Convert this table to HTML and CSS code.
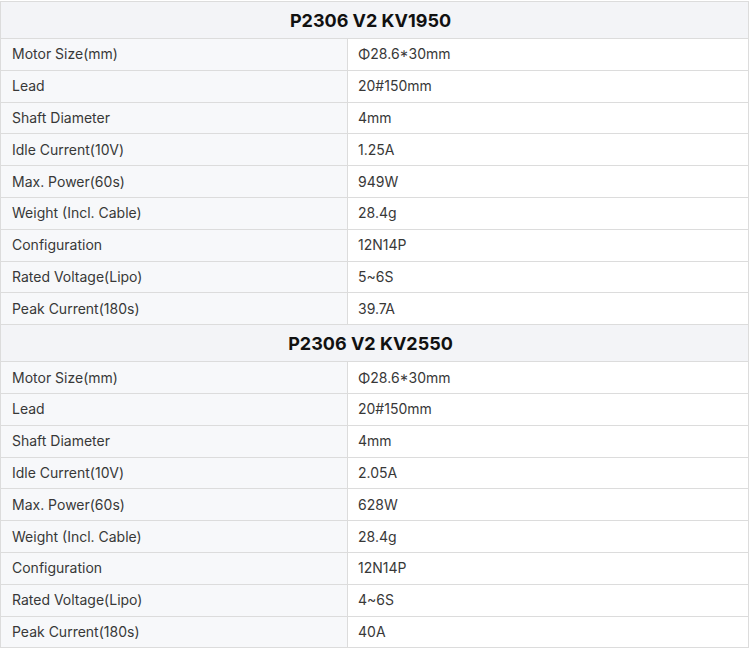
FILE: index.html
```html
<!DOCTYPE html>
<html>
<head>
<meta charset="utf-8">
<link rel="stylesheet" href="styles.css">
</head>
<body>
<table class="spec">
  <tbody>
    <tr class="head"><th colspan="2">P2306 V2 KV1950</th></tr>
    <tr><td class="k">Motor Size(mm)</td><td class="v">Φ28.6*30mm</td></tr>
    <tr><td class="k">Lead</td><td class="v">20#150mm</td></tr>
    <tr><td class="k">Shaft Diameter</td><td class="v">4mm</td></tr>
    <tr><td class="k">Idle Current(10V)</td><td class="v">1.25A</td></tr>
    <tr><td class="k">Max. Power(60s)</td><td class="v">949W</td></tr>
    <tr><td class="k">Weight (Incl. Cable)</td><td class="v">28.4g</td></tr>
    <tr><td class="k">Configuration</td><td class="v">12N14P</td></tr>
    <tr><td class="k">Rated Voltage(Lipo)</td><td class="v">5~6S</td></tr>
    <tr><td class="k">Peak Current(180s)</td><td class="v">39.7A</td></tr>
    <tr class="head"><th colspan="2">P2306 V2 KV2550</th></tr>
    <tr><td class="k">Motor Size(mm)</td><td class="v">Φ28.6*30mm</td></tr>
    <tr><td class="k">Lead</td><td class="v">20#150mm</td></tr>
    <tr><td class="k">Shaft Diameter</td><td class="v">4mm</td></tr>
    <tr><td class="k">Idle Current(10V)</td><td class="v">2.05A</td></tr>
    <tr><td class="k">Max. Power(60s)</td><td class="v">628W</td></tr>
    <tr><td class="k">Weight (Incl. Cable)</td><td class="v">28.4g</td></tr>
    <tr><td class="k">Configuration</td><td class="v">12N14P</td></tr>
    <tr><td class="k">Rated Voltage(Lipo)</td><td class="v">4~6S</td></tr>
    <tr><td class="k">Peak Current(180s)</td><td class="v">40A</td></tr>
  </tbody>
</table>
</body>
</html>
```
FILE: styles.css
```css
html, body {
  margin: 0;
  padding: 0;
  background: #ffffff;
}
.spec {
  width: 749px;
  border-collapse: collapse;
  font-family: Inter, "Noto Sans", sans-serif;
  font-size: 14px;
  color: #383838;
  margin-top: 1px;
}
.spec td, .spec th {
  border: 1px solid #dcdcdc;
  padding: 0 11px;
  text-align: left;
}
.spec td {
  height: 30.8px;
  line-height: 18px;
}
.head th {
  height: 36px;
  background: #f3f4f7;
  text-align: center;
  padding: 0 19px 0 11px;
  font-size: 18px;
  font-weight: 700;
  color: #111111;
}
.spec td.k {
  width: 324px;
  background: #f7f8fa;
}
.spec td.v {
  background: #ffffff;
  padding-left: 10px;
}
```
